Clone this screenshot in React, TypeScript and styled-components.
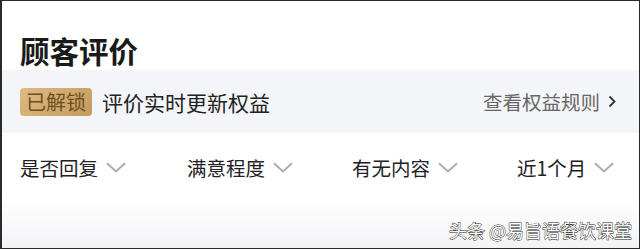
import React from "react";
import styled, { createGlobalStyle } from "styled-components";

const Global = createGlobalStyle`
  html, body { margin: 0; padding: 0; background: #fff; }
  body { font-family: "Noto Sans CJK SC", "Noto Sans", sans-serif; }
`;

const Frame = styled.div`
  position: relative;
  width: 640px;
  height: 249px;
  box-sizing: border-box;
  border: 1px solid #2a2a2a;
  border-left-width: 2px;
  background: linear-gradient(#ffffff 0px, #ffffff 195px, #f3f3f7 249px);
  overflow: hidden;
  display: flex;
  flex-direction: column;
`;

const Title = styled.h1`
  margin: 0;
  padding: 29px 0 0 18px;
  height: 40px;
  font-size: 29.5px;
  line-height: 40px;
  font-weight: 700;
  color: #1a1a1a;
`;

const Band = styled.div`
  height: 63px;
  background: #f4f5f8;
  display: flex;
  align-items: center;
  padding: 0 0 0 18px;
  justify-content: space-between;
`;

const Left = styled.div`
  display: flex;
  align-items: center;
  gap: 10px;
`;

const Badge = styled.span`
  display: inline-flex;
  align-items: center;
  height: 28px;
  padding: 0 6px;
  border-radius: 4px;
  background: linear-gradient(135deg, #dcbb82, #c69a5f);
  color: #6e4f24;
  font-size: 20px;
  line-height: 28px;
`;

const BandText = styled.span`
  font-size: 21px;
  color: #222;
`;

const Link = styled.span`
  display: flex;
  align-items: center;
  gap: 8px;
  font-size: 19.5px;
  color: #666;
  padding-right: 23px;
`;

const Filters = styled.div`
  display: grid;
  grid-template-columns: 167px 165px 165px 120px;
  padding: 19px 0 0 18px;
`;

const Filter = styled.div`
  display: flex;
  align-items: center;
  gap: 8px;
  font-size: 19.5px;
  color: #222;
  height: 30px;
`;

const Watermark = styled.div`
  position: absolute;
  right: 7px;
  bottom: 5px;
  font-size: 18px;
  color: #fff;
  -webkit-text-stroke: 0.9px #222;
  paint-order: stroke fill;
`;

const Chevron = () => (
  <svg width="20" height="11" viewBox="0 0 20 11">
    <path d="M1 1.2 L10 9.5 L19 1.2" fill="none" stroke="#adadad" strokeWidth="2" />
  </svg>
);

const Arrow = () => (
  <svg width="8" height="13" viewBox="0 0 8 13">
    <path d="M1.5 1.5 L6.5 6.5 L1.5 11.5" fill="none" stroke="#333" strokeWidth="1.8" />
  </svg>
);

export default function App() {
  const filters = ["是否回复", "满意程度", "有无内容", "近1个月"];
  return (
    <>
      <Global />
      <Frame>
        <Title>顾客评价</Title>
        <Band>
          <Left>
            <Badge>已解锁</Badge>
            <BandText>评价实时更新权益</BandText>
          </Left>
          <Link>
            查看权益规则
            <Arrow />
          </Link>
        </Band>
        <Filters>
          {filters.map((f) => (
            <Filter key={f}>
              {f}
              <Chevron />
            </Filter>
          ))}
        </Filters>
        <Watermark>头条 @易旨语餐饮课堂</Watermark>
      </Frame>
    </>
  );
}
